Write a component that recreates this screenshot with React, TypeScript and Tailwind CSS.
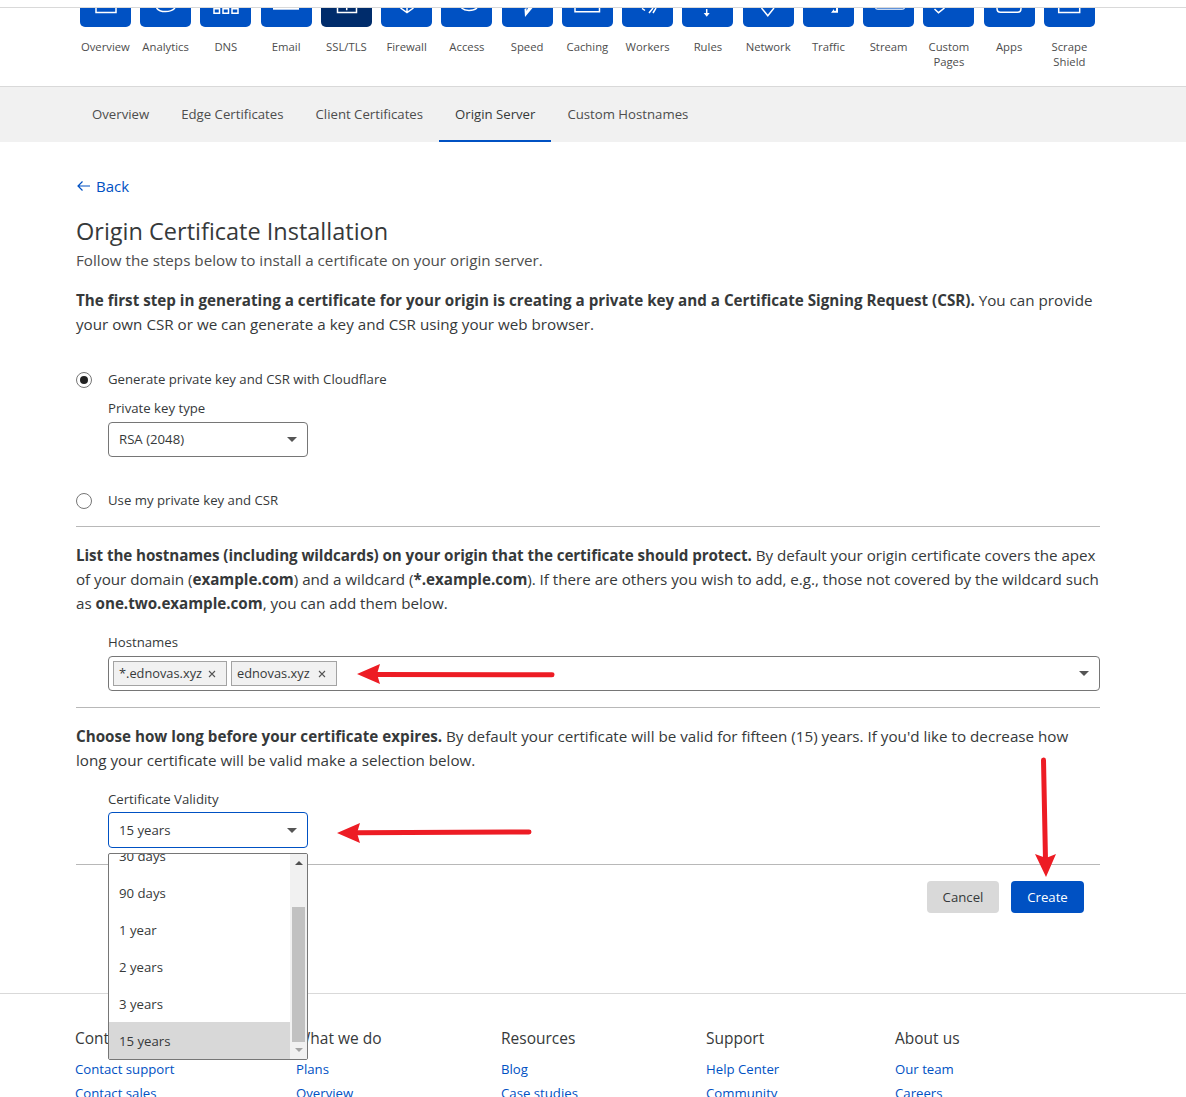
import React from 'react';

const tiles = [
  { label: 'Overview', icon: <path d="M16 0v4.600h20V0" /> },
  { label: 'Analytics', icon: <path d="M16.500 0c2 2.600 5 3.600 9 3.600s7-1 9.500-3.600" /> },
  { label: 'DNS', icon: <path d="M14 .700h5.500v4.600H14zM23 .700h5.500v4.600H23zM32 .700h6v4.600h-6z" /> },
  { label: 'Email', icon: <path d="M12 0h26v1.700H12z" fill="white" stroke="none" /> },
  { label: 'SSL/TLS', active: true, icon: <path d="M16.500 0v4.600h19V0M25.700 0v2.300" /> },
  { label: 'Firewall', icon: <path d="M19.500 0l6.500 4.500L32.500 0M26 0v4" /> },
  { label: 'Access', icon: <path d="M20.500 0c2 1.800 4 2.400 7.500 2.400S34 1.800 36 0" /> },
  { label: 'Speed', icon: <path d="M22.500 1L23 9l7.500-9H26l-1.500 3V0z" fill="white" stroke="none" /> },
  { label: 'Caching', icon: <path d="M13 0v3.700h24.500V0" /> },
  { label: 'Workers', icon: <path d="M20 .500l3 2M27 5l4-5M31 5l3-5" /> },
  { label: 'Rules', icon: <><path d="M24.700 1v4" /><path d="M21.700 5h6l-3 3.700z" fill="white" stroke="none" /></> },
  { label: 'Network', icon: <path d="M18.500 0l6.300 7.800L31 0" /> },
  { label: 'Traffic', icon: <path d="M28 4.800h7V0h-2v2.800h-2V1z" fill="white" stroke="none" /> },
  { label: 'Stream', icon: <path d="M12.500 0c.5 1 1.500 1.300 2.500 1.300h24c1 0 2-.3 2.500-1.300" stroke="#c5d8f3" /> },
  { label: 'Custom Pages', icon: <path d="M11.500 1l4 3.700L21.500 0" /> },
  { label: 'Apps', icon: <path d="M13 0v.500c0 2.200 1.500 3.800 3.500 3.800h17c2 0 3.500-1.600 3.500-3.800V0" /> },
  { label: 'Scrape Shield', icon: <path d="M14.700 0v4.600h21V0" /> },
];

const subTabs = ['Overview', 'Edge Certificates', 'Client Certificates', 'Origin Server', 'Custom Hostnames'];
const validity = ['90 days', '1 year', '2 years', '3 years'];

const footer = [
  { title: 'Contact', width: 'w-[221px]', links: ['Contact support', 'Contact sales'] },
  { title: 'What we do', width: 'w-[205px]', links: ['Plans', 'Overview'] },
  { title: 'Resources', width: 'w-[205px]', links: ['Blog', 'Case studies'] },
  { title: 'Support', width: 'w-[189px]', links: ['Help Center', 'Community'] },
  { title: 'About us', width: 'w-[200px]', links: ['Our team', 'Careers'] },
];

function Caret() {
  return <span className="block h-0 w-0 border-x-[5px] border-t-[5px] border-x-transparent border-t-[#555]" />;
}

function Tag({ text, width }: { text: string; width: string }) {
  return (
    <span className={`${width} flex h-[25px] items-center justify-between border border-[#a3a3a3] bg-[#f1f1f1] pr-[10px] pl-[5px] text-[12.800px] text-[#36393a]`}>
      {text}
      <svg width="8" height="8" viewBox="0 0 8 8" stroke="#555" strokeWidth={1.100}>
        <path d="M1 1l6 6M7 1L1 7" />
      </svg>
    </span>
  );
}

function Arrow({ d, head, className }: { d: string; head: string; className: string }) {
  return (
    <svg className={`absolute ${className}`} viewBox="0 0 220 40" fill="none">
      <path d={d} stroke="#ed1c24" strokeWidth={5} strokeLinecap="round" />
      <path d={head} fill="#ed1c24" />
    </svg>
  );
}

export default function App() {
  return (
    <div className="relative h-[1097px] w-[1186px] overflow-hidden bg-white font-['Open_Sans',sans-serif] text-[#36393a]">
      <div className="h-[87px] border-b border-[#d9d9d9]">
        <div className="h-[8px] border-b border-[#d9d9d9]" />
        <div className="ml-[75.250px] grid w-[1024.250px] grid-cols-[repeat(17,60.250px)]">
          {tiles.map((t) => (
            <div key={t.label} className="flex flex-col items-center">
              <div className={`h-[19px] w-[51px] rounded-b-[5px] ${t.active ? 'bg-[#002c6b]' : 'bg-[#0051c3]'}`}>
                <svg width="51" height="19" fill="none" stroke="white" strokeWidth={1.500}>{t.icon}</svg>
              </div>
              <span className="mt-[13px] w-[58px] text-center text-[11.300px] leading-[14.500px] text-[#4d4d4d]">{t.label}</span>
            </div>
          ))}
        </div>
      </div>

      <div className="flex h-[55px] bg-[#f1f1f1] pl-[76px]">
        {subTabs.map((t) => (
          <div
            key={t}
            className={`flex items-center px-[16px] text-[13.200px] text-[#4d4d4d] ${t === 'Origin Server' ? 'border-b-2 border-[#0051c3] pt-[2px] text-[#36393a]' : ''}`}
          >
            {t}
          </div>
        ))}
      </div>

      <div className="ml-[76px] w-[1024px]">
        <a className="mt-[32px] flex h-[24px] items-center gap-[5px] text-[15px] text-[#0051c3]">
          <svg width="15" height="12" viewBox="0 0 15 12" fill="none" stroke="#0051c3" strokeWidth={1.200}>
            <path d="M14 6H2M6.500 1.500L2 6l4.500 4.500" />
          </svg>
          Back
        </a>
        <h1 className="mt-[17px] text-[23.500px] leading-[32px] font-medium">Origin Certificate Installation</h1>
        <p className="mt-[1px] text-[15.200px] leading-[24px] text-[#4d4d4d]">Follow the steps below to install a certificate on your origin server.</p>
        <p className="mt-[16px] text-[15.200px] leading-[24px] whitespace-nowrap">
          <b className="font-bold">The first step in generating a certificate for your origin is creating a private key and a Certificate Signing Request (CSR).</b> You can provide
          <br />
          your own CSR or we can generate a key and CSR using your web browser.
        </p>

        <label className="mt-[32px] flex h-[24px] items-center gap-[16px] text-[13.200px]">
          <span className="flex h-4 w-4 items-center justify-center rounded-full border border-[#767676]">
            <span className="h-2 w-2 rounded-full bg-[#222]" />
          </span>
          Generate private key and CSR with Cloudflare
        </label>
        <div className="ml-[32px]">
          <div className="mt-[6px] text-[13.200px] leading-[20px]">Private key type</div>
          <div className="mt-[4px] flex h-[35px] w-[200px] items-center justify-between rounded-[4px] border border-[#767676] px-[10px] text-[13.200px]">
            RSA (2048)
            <Caret />
          </div>
        </div>
        <label className="mt-[32px] flex h-[24px] items-center gap-[16px] text-[13.200px]">
          <span className="h-4 w-4 rounded-full border border-[#767676]" />
          Use my private key and CSR
        </label>

        <hr className="mt-[13px] border-[#b8b8b8]" />

        <p className="mt-[16px] text-[15.200px] leading-[24px] tracking-[-0.025px] whitespace-nowrap">
          <b className="font-bold tracking-[-0.08px]">List the hostnames (including wildcards) on your origin that the certificate should protect.</b> By default your origin certificate covers the apex
          <br />
          of your domain (<b className="font-bold">example.com</b>) and a wildcard (<b className="font-bold">*.example.com</b>). If there are others you wish to add, e.g., those not covered by the wildcard such
          <br />
          as <b className="font-bold">one.two.example.com</b>, you can add them below.
        </p>

        <div className="ml-[32px]">
          <div className="mt-[17px] text-[13.200px] leading-[20px]">Hostnames</div>
          <div className="mt-[4px] flex h-[35px] w-[992px] items-center gap-[4px] rounded-[4px] border border-[#767676] pr-[10px] pl-[4px]">
            <Tag text="*.ednovas.xyz" width="w-[114px]" />
            <Tag text="ednovas.xyz" width="w-[106px]" />
            <span className="ml-auto"><Caret /></span>
          </div>
        </div>

        <hr className="mt-[16px] border-[#b8b8b8]" />

        <p className="mt-[16px] text-[15.200px] leading-[24px] whitespace-nowrap">
          <b className="font-bold">Choose how long before your certificate expires.</b> By default your certificate will be valid for fifteen (15) years. If you'd like to decrease how
          <br />
          long your certificate will be valid make a selection below.
        </p>

        <div className="ml-[32px]">
          <div className="mt-[17px] text-[13.200px] leading-[20px]">Certificate Validity</div>
          <div className="mt-[3px] flex h-[36px] w-[200px] items-center justify-between rounded-[4px] border border-[#0051c3] px-[10px] pt-px text-[13.200px]">
            15 years
            <Caret />
          </div>
        </div>

        <hr className="mt-[16px] border-[#b8b8b8]" />

        <div className="mt-[16px] flex justify-end gap-[12px] pr-[16px] text-[13.200px]">
          <button className="h-[32px] w-[72px] rounded-[4px] bg-[#d9d9d9] pt-px">Cancel</button>
          <button className="h-[32px] w-[73px] rounded-[4px] bg-[#0051c3] pt-px text-white">Create</button>
        </div>
      </div>

      <div className="mt-[80px] border-t border-[#d9d9d9] pt-[32px] pl-[75px]">
        <div className="flex">
          {footer.map((c) => (
            <div key={c.title} className={c.width}>
              <h4 className="text-[15.500px] leading-[24px] font-medium">{c.title}</h4>
              <ul className="mt-[7px] text-[13.200px] leading-[24px] text-[#0051c3]">
                {c.links.map((l) => <li key={l}>{l}</li>)}
              </ul>
            </div>
          ))}
        </div>
      </div>

      {/* open select list */}
      <div className="absolute top-[853px] left-[108px] flex h-[207px] w-[200px] overflow-hidden rounded-[2px] border border-[#767676] bg-white text-[13.200px]">
        <div className="w-[181px]">
          <div className="-mt-[16px] flex h-[37px] items-center pl-[10px]">30 days</div>
          {validity.map((v) => (
            <div key={v} className="flex h-[37px] items-center pl-[10px]">{v}</div>
          ))}
          <div className="-mt-px flex h-[38px] items-center bg-[#d8d8d8] pt-[2px] pl-[10px]">15 years</div>
        </div>
        <div className="flex w-[17px] flex-col items-center bg-[#f1f1f1]">
          <span className="mt-[7px] h-0 w-0 border-x-[4px] border-b-[4px] border-x-transparent border-b-[#505050]" />
          <span className="mt-[42px] h-[135px] w-[13px] bg-[#c1c1c1]" />
          <span className="mt-[6px] h-0 w-0 border-x-[4px] border-t-[4px] border-x-transparent border-t-[#a3a3a3]" />
        </div>
      </div>

      {/* red annotation arrows */}
      <Arrow className="top-[654px] left-[357px] h-[40px] w-[220px]" d="M20 20.500L195 20.700" head="M0 20L23 10L20 20L23 30Z" />
      <Arrow className="top-[813px] left-[337px] h-[40px] w-[220px]" d="M20 19.800L192 19" head="M0 20L23 10L20 20L23 30Z" />
      <svg className="absolute top-[755px] left-[1030px] h-[125px] w-[30px]" viewBox="0 0 30 125" fill="none">
        <path d="M13.500 5L15.500 105" stroke="#ed1c24" strokeWidth={5} strokeLinecap="round" />
        <path d="M16 122L5 99L16 103L26 99Z" fill="#ed1c24" />
      </svg>
    </div>
  );
}
